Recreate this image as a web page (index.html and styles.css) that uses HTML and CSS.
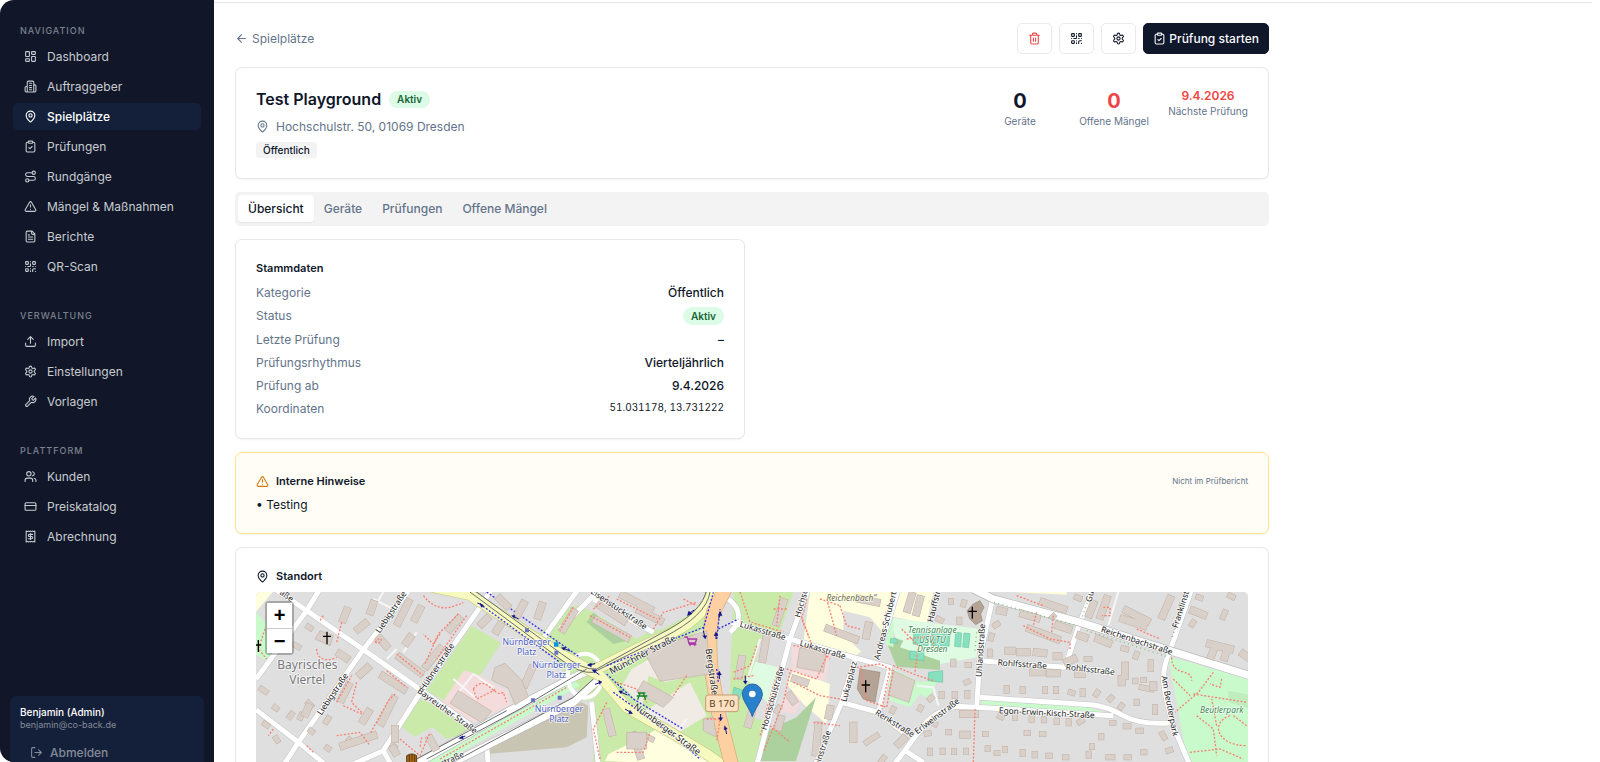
FILE: index.html
```html
<!DOCTYPE html>
<html lang="de">
<head>
<meta charset="utf-8">
<title>Test Playground – Spielplätze</title>
<link rel="stylesheet" href="styles.css">
</head>
<body>
<svg class="sprite" aria-hidden="true">
  <symbol id="i-dashboard" viewBox="0 0 24 24"><rect x="3" y="3" width="7" height="9" rx="1"/><rect x="14" y="3" width="7" height="5" rx="1"/><rect x="14" y="12" width="7" height="9" rx="1"/><rect x="3" y="16" width="7" height="5" rx="1"/></symbol>
  <symbol id="i-building" viewBox="0 0 24 24"><path d="M6 22V4a2 2 0 0 1 2-2h8a2 2 0 0 1 2 2v18ZM6 12H4a2 2 0 0 0-2 2v6a2 2 0 0 0 2 2h2M18 9h2a2 2 0 0 1 2 2v9a2 2 0 0 1-2 2h-2M10 6h4M10 10h4M10 14h4M10 18h4"/></symbol>
  <symbol id="i-pin" viewBox="0 0 24 24"><path d="M20 10c0 4.993-5.539 10.193-7.399 11.799a1 1 0 0 1-1.202 0C9.539 20.193 4 14.993 4 10a8 8 0 0 1 16 0"/><circle cx="12" cy="10" r="3"/></symbol>
  <symbol id="i-clipboard" viewBox="0 0 24 24"><rect x="8" y="2" width="8" height="4" rx="1"/><path d="M16 4h2a2 2 0 0 1 2 2v14a2 2 0 0 1-2 2H6a2 2 0 0 1-2-2V6a2 2 0 0 1 2-2h2M9 14l2 2 4-4"/></symbol>
  <symbol id="i-route" viewBox="0 0 24 24"><circle cx="6" cy="19" r="3"/><path d="M9 19h8.5a3.5 3.5 0 0 0 0-7h-11a3.5 3.5 0 0 1 0-7H15"/><circle cx="18" cy="5" r="3"/></symbol>
  <symbol id="i-alert" viewBox="0 0 24 24"><path d="m21.73 18-8-14a2 2 0 0 0-3.48 0l-8 14A2 2 0 0 0 4 21h16a2 2 0 0 0 1.73-3M12 9v4M12 17h.01"/></symbol>
  <symbol id="i-file" viewBox="0 0 24 24"><path d="M15 2H6a2 2 0 0 0-2 2v16a2 2 0 0 0 2 2h12a2 2 0 0 0 2-2V7ZM14 2v4a2 2 0 0 0 2 2h4M10 9H8M16 13H8M16 17H8"/></symbol>
  <symbol id="i-qr" viewBox="0 0 24 24"><rect x="3" y="3" width="5" height="5" rx="1"/><rect x="16" y="3" width="5" height="5" rx="1"/><rect x="3" y="16" width="5" height="5" rx="1"/><path d="M21 16h-3a2 2 0 0 0-2 2v3M21 21v.01M12 7v3a2 2 0 0 1-2 2H7M3 12h.01M12 3h.01M12 16v.01M16 12h1M21 12v.01M12 21v-1"/></symbol>
  <symbol id="i-upload" viewBox="0 0 24 24"><path d="M12 3v12M17 8l-5-5-5 5M21 15v4a2 2 0 0 1-2 2H5a2 2 0 0 1-2-2v-4"/></symbol>
  <symbol id="i-gear" viewBox="0 0 24 24"><path d="M12.22 2h-.44a2 2 0 0 0-2 2v.18a2 2 0 0 1-1 1.73l-.43.25a2 2 0 0 1-2 0l-.15-.08a2 2 0 0 0-2.73.73l-.22.38a2 2 0 0 0 .73 2.73l.15.1a2 2 0 0 1 1 1.72v.51a2 2 0 0 1-1 1.74l-.15.09a2 2 0 0 0-.73 2.73l.22.38a2 2 0 0 0 2.73.73l.15-.08a2 2 0 0 1 2 0l.43.25a2 2 0 0 1 1 1.73V20a2 2 0 0 0 2 2h.44a2 2 0 0 0 2-2v-.18a2 2 0 0 1 1-1.73l.43-.25a2 2 0 0 1 2 0l.15.08a2 2 0 0 0 2.73-.73l.22-.39a2 2 0 0 0-.73-2.73l-.15-.08a2 2 0 0 1-1-1.74v-.5a2 2 0 0 1 1-1.74l.15-.09a2 2 0 0 0 .73-2.73l-.22-.38a2 2 0 0 0-2.73-.73l-.15.08a2 2 0 0 1-2 0l-.43-.25a2 2 0 0 1-1-1.73V4a2 2 0 0 0-2-2z"/><circle cx="12" cy="12" r="3"/></symbol>
  <symbol id="i-wrench" viewBox="0 0 24 24"><path d="M14.7 6.3a1 1 0 0 0 0 1.4l1.6 1.6a1 1 0 0 0 1.4 0l3.77-3.77a6 6 0 0 1-7.94 7.94l-6.91 6.91a2.12 2.12 0 0 1-3-3l6.91-6.91a6 6 0 0 1 7.94-7.94l-3.76 3.76z"/></symbol>
  <symbol id="i-users" viewBox="0 0 24 24"><path d="M16 21v-2a4 4 0 0 0-4-4H6a4 4 0 0 0-4 4v2M22 21v-2a4 4 0 0 0-3-3.87M16 3.13a4 4 0 0 1 0 7.75"/><circle cx="9" cy="7" r="4"/></symbol>
  <symbol id="i-card" viewBox="0 0 24 24"><rect x="2" y="5" width="20" height="14" rx="2"/><path d="M2 10h20"/></symbol>
  <symbol id="i-receipt" viewBox="0 0 24 24"><path d="M4 2v20l2-1 2 1 2-1 2 1 2-1 2 1 2-1 2 1V2l-2 1-2-1-2 1-2-1-2 1-2-1-2 1ZM16 8h-6a2 2 0 1 0 0 4h4a2 2 0 1 1 0 4H8M12 17.5v-11"/></symbol>
  <symbol id="i-logout" viewBox="0 0 24 24"><path d="M16 17l5-5-5-5M21 12H9M9 21H5a2 2 0 0 1-2-2V5a2 2 0 0 1 2-2h4"/></symbol>
  <symbol id="i-back" viewBox="0 0 24 24"><path d="M12 19l-7-7 7-7M19 12H5"/></symbol>
  <symbol id="i-trash" viewBox="0 0 24 24"><path d="M3 6h18M19 6v14a2 2 0 0 1-2 2H7a2 2 0 0 1-2-2V6M8 6V4a2 2 0 0 1 2-2h4a2 2 0 0 1 2 2v2M10 11v6M14 11v6"/></symbol>
</svg>

<div class="app">
  <aside class="sidebar">
    <nav class="nav">
      <section class="nav-group">
        <h2 class="nav-title">NAVIGATION</h2>
        <a class="nav-item" href="#"><svg class="icon"><use href="#i-dashboard"/></svg>Dashboard</a>
        <a class="nav-item" href="#"><svg class="icon"><use href="#i-building"/></svg>Auftraggeber</a>
        <a class="nav-item is-active" href="#"><svg class="icon"><use href="#i-pin"/></svg>Spielplätze</a>
        <a class="nav-item" href="#"><svg class="icon"><use href="#i-clipboard"/></svg>Prüfungen</a>
        <a class="nav-item" href="#"><svg class="icon"><use href="#i-route"/></svg>Rundgänge</a>
        <a class="nav-item" href="#"><svg class="icon"><use href="#i-alert"/></svg>Mängel &amp; Maßnahmen</a>
        <a class="nav-item" href="#"><svg class="icon"><use href="#i-file"/></svg>Berichte</a>
        <a class="nav-item" href="#"><svg class="icon"><use href="#i-qr"/></svg>QR-Scan</a>
      </section>
      <section class="nav-group">
        <h2 class="nav-title">VERWALTUNG</h2>
        <a class="nav-item" href="#"><svg class="icon"><use href="#i-upload"/></svg>Import</a>
        <a class="nav-item" href="#"><svg class="icon"><use href="#i-gear"/></svg>Einstellungen</a>
        <a class="nav-item" href="#"><svg class="icon"><use href="#i-wrench"/></svg>Vorlagen</a>
      </section>
      <section class="nav-group">
        <h2 class="nav-title">PLATTFORM</h2>
        <a class="nav-item" href="#"><svg class="icon"><use href="#i-users"/></svg>Kunden</a>
        <a class="nav-item" href="#"><svg class="icon"><use href="#i-card"/></svg>Preiskatalog</a>
        <a class="nav-item" href="#"><svg class="icon"><use href="#i-receipt"/></svg>Abrechnung</a>
      </section>
    </nav>
    <div class="user">
      <div class="user-name">Benjamin (Admin)</div>
      <div class="user-mail">benjamin@co-back.de</div>
      <button class="logout" type="button"><svg class="icon"><use href="#i-logout"/></svg>Abmelden</button>
    </div>
  </aside>

  <main class="main">
    <div class="topline"></div>
    <div class="page">
      <header class="toolbar">
        <a class="back" href="#"><svg class="icon"><use href="#i-back"/></svg>Spielplätze</a>
        <div class="actions">
          <button class="btn btn-danger" type="button" aria-label="Löschen"><svg class="icon"><use href="#i-trash"/></svg></button>
          <button class="btn" type="button" aria-label="QR-Code"><svg class="icon"><use href="#i-qr"/></svg></button>
          <button class="btn" type="button" aria-label="Einstellungen"><svg class="icon"><use href="#i-gear"/></svg></button>
          <button class="btn btn-primary" type="button"><svg class="icon"><use href="#i-clipboard"/></svg>Prüfung starten</button>
        </div>
      </header>

      <section class="card summary">
        <div class="summary-info">
          <div class="headline"><h1 class="title">Test Playground</h1><span class="badge">Aktiv</span></div>
          <div class="address"><svg class="icon"><use href="#i-pin"/></svg>Hochschulstr. 50, 01069 Dresden</div>
          <span class="tag">Öffentlich</span>
        </div>
        <div class="stats">
          <div class="stat"><div class="stat-value">0</div><div class="stat-label">Geräte</div></div>
          <div class="stat"><div class="stat-value is-red">0</div><div class="stat-label">Offene Mängel</div></div>
          <div class="stat"><div class="stat-date">9.4.2026</div><div class="stat-label">Nächste Prüfung</div></div>
        </div>
      </section>

      <div class="tabs" role="tablist">
        <button class="tab is-active" type="button" role="tab" aria-selected="true">Übersicht</button>
        <button class="tab" type="button" role="tab">Geräte</button>
        <button class="tab" type="button" role="tab">Prüfungen</button>
        <button class="tab" type="button" role="tab">Offene Mängel</button>
      </div>

      <div class="columns">
        <section class="card stack">
          <h2 class="card-title">Stammdaten</h2>
          <dl class="facts">
            <div class="fact"><dt>Kategorie</dt><dd>Öffentlich</dd></div>
            <div class="fact"><dt>Status</dt><dd><span class="badge">Aktiv</span></dd></div>
            <div class="fact"><dt>Letzte Prüfung</dt><dd>–</dd></div>
            <div class="fact"><dt>Prüfungsrhythmus</dt><dd>Vierteljährlich</dd></div>
            <div class="fact"><dt>Prüfung ab</dt><dd>9.4.2026</dd></div>
            <div class="fact"><dt>Koordinaten</dt><dd class="coords">51.031178, 13.731222</dd></div>
          </dl>
        </section>
      </div>

      <section class="card stack notes">
        <div class="notes-head">
          <h2 class="card-title"><svg class="icon icon-warn"><use href="#i-alert"/></svg>Interne Hinweise</h2>
          <span class="hint">Nicht im Prüfbericht</span>
        </div>
        <p class="note">• Testing</p>
      </section>

      <section class="card stack">
        <h2 class="card-title"><svg class="icon"><use href="#i-pin"/></svg>Standort</h2>
        <div class="map">
          <svg class="map-canvas" viewBox="48 39 2976 756" preserveAspectRatio="xMidYMin slice" role="img" aria-label="Karte">
            <defs>
              <path id="b-s" d="M205 143l6 4M165 198l10 6M65 330l12 8M205 372l8 8M265 418l-6 10M155 405l-6 8M185 408l-4 8M105 385l4 3M75 435l6 4M108 478l4 6M212 455l4 3M328 482l3 3M262 507l3 2M458 500l6 4M1225 475l10 5M1610 395l6 -8M2510 55l8 3M2172 70l-2 6M2133 66v2M2095 120l8 4M2158 122v6M2140 248v8M2183 258h4M2183 308l-4 2M2105 345v6M2144 345v6M2182 342v8M2300 327v8M2348 330v6M2415 330v6M2448 330v6M2492 340l6 2M2528 337v8M2572 340l-4 6M2070 360l4 -4M2040 390l2 -4M1960 390l-3 6M2085 435l-8 -4M2060 464l6 -1M2125 460h2M2235 465h2M2360 462h4M2406 465h4M2280 412l4 2M2325 412v4M2375 418v4M2412 420v4M2450 425v4M2486 427v6M2525 425l-6 4M2617 432h3M2657 442h8M2695 455h8M2610 360l4 -4M2645 380l-3 4M2690 368v4M2745 385v14M2767 465l6 10M2785 515l6 -2M2705 325l30 6M2710 303l2 0M2686 305v2M2070 515v6M2108 515v4M2142 516v3M2178 515v3M2243 508v2M2270 522h2M2295 510v2M2348 525v-6M2384 525v4M2425 530h4M2475 535h4M2546 530v-6M2584 475v-4M2556 502v2M2605 535h12M2660 535h6M2710 520h3M2272 135l-6 4M2255 170l-2 8M2250 218v8M2440 112l-2 2M2540 240h8M2650 208l8 2M2690 225l-3 8M2732 250v20M2860 130l-4 6M2955 100l-6 14M2875 55l6 2M2970 50l8 4M1880 490l30 -20M1925 545l6 -8"/>
              <path id="b-m" d="M320 95l-10 25M355 150l20 -16M400 75l-8 22M300 225l18 12M362 285l20 -18M205 385l-8 18M540 90l-14 28M600 210l-40 50M480 235l60 45M430 292l60 38M460 360l-35 70M385 400l-15 24M505 70l-30 60M655 120l-25 30M740 120l-14 14M770 155l10 -16M780 60l20 20M850 75l-16 30M465 450v30M460 510l6 10M570 480l14 24M310 500l90 -30M325 320l-20 40M905 80l-10 30M875 270l-20 45M420 180l18 20M500 190l10 -14M1000 100l-30 50M1080 80l70 45M1150 50l80 40M1070 125l90 50M1200 95l60 30M1100 400l15 60M1180 470l20 60M1630 70l-20 60M1580 170l-12 70M1505 240l-8 50M1535 400l-10 35M1765 150l80 30M1860 60l50 10M1885 140l-6 30M1665 300l30 10M1622 420l-6 24M1650 350l10 15M2015 50l-12 40M2040 60l-10 40M2280 95l10 2M2350 105l40 12M2370 150l80 30M2410 70l60 20M2455 140l30 10M2500 240l-18 8M2560 75l-12 30M2600 60l-18 50M2660 95l60 30M2650 120l60 20M2790 60l-22 50M2860 95l30 12M2910 195l60 15M2920 215l-6 15M2960 215l-6 20M3010 225l14 10M2305 215h10M2340 220h20M2390 220l20 2M2450 232h5M2520 170l14 5M2575 180l30 12M2655 260v30M2645 300v10M2740 318v6M2170 405h35M2170 467h10M2380 280h25M2430 283h20M2515 285h10M1735 440l-8 80M1770 390l-4 20M1840 440v40M1990 480l-14 14"/>
              <path id="foot" d="M75 150l-20 60 25 30M250 110l-10 15M305 130l-15 60M230 210c0 30 30 40 60 25M470 225l80 65M550 50c40 50 80 40 120 20M655 105l-60 60-40 90M680 110l-90 130M405 190c20-30 30 10 0 0M350 310l-15 60 35 35M290 370l45-80M440 275l60 50M465 345l-20 20-55 100M600 165l-20 30-30-30M310 380l55 25M290 470l70-10 30 40M100 450l-15 20M200 500l20 20M480 480l60 50 30-70M700 330c40-50 60 30 90 10l10 30M700 330l10 30 60-30M545 475l-5 30M1000 85l-40 70M1050 110l120 65M1130 60l120 60M1240 150l30-50 100-30M1060 90l50-40M1330 60l40 20M1100 370l-40 80 20 90M1130 520h80l20-60M1400 420l40 0-10 70M1500 39l30 90 100 30M1620 50l-10 90M1640 90l-40 0M1700 60l-15 60 20 50M1680 100l40 110M1740 60l60 20M1800 80l20 60 40 10M1550 200l-20 60-50 20M1480 300l60-10M1620 260l-20 60-25 90M1610 340l-50 130M1650 280l-20 90-60 150M1660 310l80 40 60 10M1760 230l-30 70-90-30M1660 200l80 10 30 30M1760 60l30 110M1850 265l70-10 40 20-20 110-60-20-20-100M1720 430l80 10M1590 440l60 50M1130 310l60 20 30 40M1300 350l40-60M2000 180l80-10 0 50M1960 260l60 25 60 20M1950 270l-25 120M1985 150l50 50-10 80M2350 140l80 40 60 10 0 20M2330 50l80 30M2390 100l-10 40M2440 110l-5 50M2590 85h20v25h-25M2690 150l70 30M2795 235c0 60 60 30 60 70M2205 390l-5 160M2920 280l-45 60-70 60M2945 300l-5 25-30-10M2860 345l160 25M2870 410l50 40 10 80M2970 410c-60 20-40 90 50 90M2980 410l40 30M2800 300l50 50M2850 520l90-10 70 30M2930 440l-15-80"/>
            </defs>
            <rect class="land" x="48" y="39" width="2976" height="756"/>
            <!-- land use -->
            <path class="park" d="M48 100l30 32v34l22 50-14 30-38-18z"/>
            <path class="school" d="M48 39h50L48 98z"/>
            <path class="grass" d="M695 140l88 52-64 98-42-15-60 92-58-32zM545 358l160 98-85 24-43-36-52 29-48-34zM900 165l85-80 35-5 40 20 130 80 60-40 120-60 40-60 60-10-30 110-400 250-80-110z"/>
            <path class="grass" d="M1060 280l330-180 20 200 60 300H1060zM1480 39h180l-40 120-60 20-40 230 60 20-60 190h-70l20-300z"/>
            <path class="land" d="M1040 39h370l-30 50-110 60-90 20-130-85z"/>
            <path class="forest" d="M1060 100l100 85-40 10-80-65z"/>
            <path class="pink" d="M672 274l50 16 80 48 8 40-110 52-96-55zM1655 198l115 20-12 90-100-30zM1635 335l52 8-20 62-42-6z"/>
            <path class="brown" d="M745 500l280-130 20 10-5 95-60 30-240 20z"/>
            <path class="retail" d="M1175 270l215-120 16 130-130 30-50-20-20 90-60-60zM1210 400l140-90 50 100-100 60z"/>
            <path class="school" d="M1710 39h230l-10 120-80 70-160-40zM1660 275l110 40-10 120-70-60-50-60zM1095 546l10-20 120-60 40-25 80 40 70 80zM1880 39h200l-20 96-110-24zM2320 39h160v8z"/>
            <path class="mint" d="M1545 248l75 18-34 110-60-70zM1940 115l280 35-10 85-110 20-110-30z"/>
            <path class="forest" d="M1580 455l90-40 58-60-60 191h-110zM1930 165l60 20-10 20 120 40v28l-130-10z"/>
            <path class="land" d="M1810 95l80 20 50 60-20 60-60-20-50-50z"/>
            <path class="park" d="M1940 260l100 50 50-5-20 55-30-15-30 40-60-20zM1945 145l-10 50 25 10v-90z"/>
            <path class="pitch" d="M1482 325l26 8-10 28-22-5zM2022 158l45 4-3 38-45-5zM2075 162l55 4-3 36-54-3zM2147 160l18 2-3 42-18-2zM2172 162l18 2-4 42-18-2zM2010 216l42 3v26l-44-5zM2066 280l42-5v35l-44-5zM1952 178l20 3v12l-22-2z"/>
            <path class="park" d="M2785 232l239 68v260h-180zM2225 364l310 18 70 22-380-24zM700 465l300-165 20 20-430 240h-60z"/>
            <path class="forest soft" d="M2965 335l60 12v40l-60-18z"/>
            <!-- side roads -->
            <g class="casing">
              <path id="roads" d="M90 20L200 95 370 212 545 335 710 452M240 30L200 95 48 300M510 30L370 212 175 490 130 560M48 392L175 490 260 560M755 30L720 85 545 335 430 515 455 560M430 515L340 555M1015 30L905 185M1080 30L960 150M1060 60L1240 160M1055 370L1075 560M740 500L745 560M1465 60c40 30 40 70 5 100M1475 130L1650 180 1840 235 1950 265 1915 400 1805 370M1915 400L1990 460M1845 240L1805 370 1725 560M1975 30L1910 240M1705 30L1650 180 1550 560M1950 265L1920 380M2260 50L2220 230 2210 385M2560 30L2520 130 2475 265M2220 245L2475 265 2615 275V290M2145 382L2210 385 2620 410M2220 355L2560 378Q2600 382 2650 410T2790 432M2145 382Q2080 400 2050 440L1960 560M1995 515L2050 550M2855 30L2790 215Q2765 270 2772 320T2800 440L2850 560"/>
            </g>
            <use class="street" href="#roads"/>
            <path class="lane" d="M400 60l60 30M440 240l30-30M430 39l-35 60M640 360l60-75 60 40M640 300l70 60M530 160l-40 60M2030 320l50 5 15 55M2635 39l-30 100M1560 180l-40 130M1220 250l80-40M1340 420l-30 40"/>
            <path class="big-casing" d="M2200 30L2260 60 2520 130 2790 215 3030 290M520 560L800 400 980 305 1080 260M600 570L840 450 1000 370 1090 290"/>
            <path class="big" d="M2200 30L2260 60 2520 130 2790 215 3030 290M520 560L800 400 980 305 1080 260M600 570L840 450 1000 370 1090 290"/>
            <ellipse class="ring" cx="1035" cy="290" rx="52" ry="66"/>
            <!-- main roads -->
            <path class="yellow-casing" d="M560 20L690 48 860 160 960 225 1080 290 1160 385 1300 465 1400 525 1450 560M1050 280L1180 215 1300 160Q1400 110 1420 30"/>
            <path class="yellow" d="M560 20L690 48 860 160 960 225 1080 290 1160 385 1300 465 1400 525 1450 560M1050 280L1180 215 1300 160Q1400 110 1420 30"/>
            <path class="orange-casing" d="M1455 30L1420 100Q1405 150 1412 260L1435 400 1475 560"/>
            <path class="orange" d="M1455 30L1420 100Q1405 150 1412 260L1435 400 1475 560"/>
            <path class="rail" d="M690 39L860 165 960 240Q1020 285 1060 280L1270 175Q1400 110 1410 39M700 32L865 152 965 225Q1030 275 1070 270L1260 165Q1390 100 1400 30M560 540L840 390 1040 270M530 540L800 395M620 560L1000 355 1060 300"/>
            <path class="bus" d="M740 39L870 130 1020 235M720 75L850 170 960 250M1100 260L1390 145M1100 285L1180 360 1330 450M1120 340L1300 470 1380 540M1390 150l30-110M1430 180l10-90M1435 150l60-30M1430 270l5 40"/>
            <!-- buildings -->
            <g class="buildings">
              <use class="edge-s" href="#b-s"/><use class="fill-s" href="#b-s"/>
              <use class="edge-m" href="#b-m"/><use class="fill-m" href="#b-m"/>
              <path class="block" d="M655 335l100 62-30 34-95-58zM765 265l30-12 50 50 20 50-40 25-20-50-50-25zM1210 215l190-60 10 130-150 22zM1210 305l90 50-30 30-80-45zM1680 205l80 15-10 60-80-15zM1960 275l65 30-18 65-62-22zM240 155l40 15-10 30-45-20zM1160 460h60v50h-60zM1390 420l30-5 10 60-40-20z"/>
              <path class="church" d="M1860 270l60 10-15 90-35-10-18-30zM2200 75l20-10 12 20-10 20 5 20-20 12-18-18-8-24z"/>
            </g>
            <use class="footway" href="#foot"/>
            <path class="trees" d="M2262 70L2510 140M2540 155L2780 232M2545 60l-20 60M2835 60l-40 120M2210 160l-6 60"/>
            <path class="footway" d="M600 540L980 325"/>
            <!-- symbols -->
            <g class="cross"><path d="M261 158v38M249 172h24M55 183v36M48 198h16M1877 304v36M1865 318h25M2197 83v36M2185 97h26"/></g>
            <path class="stop" d="M855 148h12v12h-12zM943 215h12v12h-12zM873 358h12v12h-12zM953 350h12v12h-12z"/>
            <path class="stop-blue" d="M942 190h13v13h-13z"/>
            <path class="arrow" d="M712 72l16 6M820 112l16 8M970 208l20 8M1345 105l18-12M1045 258l20-4M1060 275l18 12M1065 316l18-6M1140 338l22 10M1155 390l20 12M1390 155l4 18M1428 180v-16M1436 118l4-14M1438 300v-18M1442 405v14M1460 465l-4-18M1516 290v18M660 477l16-6"/>
            <path class="heads" d="M732 81l-12-8 4 12zM815 110l10-2-2 10zM964 206l14-2-6 10zM1342 110l4-14 10 8zM1042 258l12-6v12zM1056 272l14 0-6 10zM1086 309l-10-5 2 12zM1136 336l12-1-5 10zM1178 404l-8-10-4 10zM1396 180l-8-10h12zM1428 158l-6 12h12zM1442 98l-8 10 12 3zM1438 276l-6 12h12zM1442 426l-6-10h12zM1454 440l-2 12 10-2zM1516 316l-6-10h12zM656 478l12-8 2 10z"/>
            <path class="shop" d="M1334 174h8l6 22h20M1344 180h26l-4 12h-20zM1350 200h.1M1364 200h.1"/>
            <path class="picnic" d="M1194 342h22M1190 351h32M1200 342l-7 20M1210 342l7 20"/>
            <path class="gate" d="M500 530q16-10 30 0v20h-30zM508 528v20M516 526v20M524 528v20"/>
            <!-- labels -->
            <g class="place"><text x="202" y="270">Bayrisches</text><text x="202" y="315">Viertel</text></g>
            <g class="transit"><text x="860" y="197">Nürnberger</text><text x="860" y="227">Platz</text><text x="949" y="268">Nürnberger</text><text x="949" y="297">Platz</text><text x="957" y="400">Nürnberger</text><text x="957" y="429">Platz</text></g>
            <g class="leisure"><text x="2077" y="161">Tennisanlage</text><text x="2077" y="191">USV TU</text><text x="2077" y="220">Dresden</text><text x="2945" y="401">Beutlerpark</text><text class="olive" x="1834" y="67">Reichenbach“</text></g>
            <g class="roadname">
              <text transform="translate(135 57) rotate(35)">aße</text>
              <text transform="translate(460 104) rotate(-56)">Liebigstraße</text>
              <text transform="translate(285 350) rotate(-56)">Liebigstraße</text>
              <text transform="translate(598 268) rotate(-56)">Hübnerstraße</text>
              <text transform="translate(617 402) rotate(36)">Bayreuther Straße</text>
              <text transform="translate(640 547) rotate(-24)">straße</text>
              <text transform="translate(1132 97) rotate(34)">Eisenstuckstraße</text>
              <text class="major" transform="translate(1212 235) rotate(-28)">Münchner Straße</text>
              <text class="major" transform="translate(1276 458) rotate(36)">Nürnberger Straße</text>
              <text class="major" transform="translate(1406 280) rotate(82)">Bergstraße</text>
              <text transform="translate(1566 163) rotate(17)">Lukasstraße</text>
              <text transform="translate(1746 220) rotate(17)">Lukasstraße</text>
              <text transform="translate(1606 360) rotate(-74)">Hochschulstraße</text>
              <text transform="translate(1692 76) rotate(-74)">Hochsc</text>
              <text transform="translate(1835 310) rotate(-75)">Lukasplatz</text>
              <text transform="translate(1945 138) rotate(-76)">Andreas-Schubert-</text>
              <text transform="translate(2090 84) rotate(-76)">Hauffstr</text>
              <text transform="translate(1756 510) rotate(-72)">einstraße</text>
              <text transform="translate(1960 440) rotate(32)">Renkstraße</text>
              <text transform="translate(2096 418) rotate(-37)">Erlweinstraße</text>
              <text transform="translate(2230 215) rotate(-86)">Uhlandstraße</text>
              <text transform="translate(2346 264) rotate(4)">Rohlfsstraße</text>
              <text transform="translate(2550 280) rotate(6)">Rohlfsstraße</text>
              <text transform="translate(2420 410) rotate(3)">Egon-Erwin-Kisch-Straße</text>
              <text transform="translate(2688 193) rotate(18)">Reichenbachstraße</text>
              <text transform="translate(2558 54) rotate(-76)">Gu</text>
              <text transform="translate(2830 94) rotate(-72)">Franklinst</text>
              <text transform="translate(2781 382) rotate(79)">Am Beutlerpark</text>
            </g>
            <rect class="shield" x="1397" y="348" width="98" height="50" rx="7"/>
            <text class="shield-text" x="1446" y="384">B 170</text>
            <!-- marker -->
            <path class="marker" d="M1537 413c-8-26-30-48-30-68a30 30 0 0 1 60 0c0 20-22 42-30 68z"/>
            <circle class="marker-dot" cx="1537" cy="345" r="10"/>
          </svg>
          <div class="zoom">
            <button class="zoom-btn" type="button" aria-label="Vergrößern">+</button>
            <button class="zoom-btn" type="button" aria-label="Verkleinern">−</button>
          </div>
        </div>
      </section>
    </div>
  </main>
</div>
</body>
</html>
```
FILE: styles.css
```css
* { box-sizing: border-box; }
body, h1, h2, p, dl, dd { margin: 0; }
body {
  font: 12px/17px Inter, "Liberation Sans", sans-serif;
  color: #0f172a;
  background: #fff;
}
button { font: inherit; color: inherit; border: 0; background: none; padding: 0; cursor: pointer; }
a { color: inherit; text-decoration: none; }
.sprite { position: absolute; width: 0; height: 0; }
.icon {
  width: 13px;
  height: 13px;
  flex: none;
  fill: none;
  stroke: currentColor;
  stroke-width: 2;
  stroke-linecap: round;
  stroke-linejoin: round;
}

.app { display: flex; height: 100vh; overflow: hidden; }

/* Sidebar */
.sidebar {
  display: flex;
  flex-direction: column;
  flex: none;
  width: 214px;
  background: #111729;
  color: #c8cbd0;
  border-radius: 14px 0 0 14px;
  overflow: hidden;
}
.nav { flex: 1; display: flex; flex-direction: column; gap: 28px; padding: 24px 13px 0; }
.nav-group { display: flex; flex-direction: column; gap: 3px; }
.nav-title { padding: 0 7px; margin-bottom: 2px; font-size: 9px; line-height: 14px; font-weight: 500; letter-spacing: 1px; color: #7c828e; }
.nav-item { display: flex; align-items: center; gap: 10px; height: 27px; padding: 0 11px; border-radius: 5px; }
.nav-item.is-active { background: #14203a; color: #fff; font-weight: 500; }
.nav-group + .nav-group { padding-top: 1px; }
.user { margin: 0 10px -12px; padding: 9px 10px 8px; border-radius: 7px; background: #14203a; }
.user-name { font-size: 10px; line-height: 14px; font-weight: 500; color: #fff; }
.user-mail { font-size: 9px; line-height: 12px; color: #848b98; }
.logout { display: flex; align-items: center; gap: 7px; height: 27px; margin-top: 8px; padding: 0 10px; font-weight: 500; color: #848b98; }

/* Main column */
.main { flex: 1; min-width: 0; overflow-y: auto; scrollbar-width: none; }
.topline { margin: 2px 8px 0 0; border-top: 1px solid #e6e6e8; }
.page { display: flex; flex-direction: column; gap: 13px; max-width: 1076px; padding: 20px 21px; }
.toolbar { display: flex; align-items: center; justify-content: space-between; }
.back { display: flex; align-items: center; gap: 4px; color: #64748b; }
.actions { display: flex; gap: 7px; }
.btn {
  display: flex;
  align-items: center;
  justify-content: center;
  gap: 3px;
  min-width: 35px;
  height: 31px;
  padding: 0 9px;
  border: 1px solid #e9eaec;
  border-radius: 5px;
  font-weight: 500;
}
.btn-danger { color: #ef4444; }
.btn-primary { background: #0f172a; border-color: #0f172a; color: #f8fafc; }

.card { padding: 20px; border: 1px solid #e8e8ea; border-radius: 7px; background: #fff; box-shadow: 0 1px 2px rgba(0, 0, 0, .05); }
.stack { display: flex; flex-direction: column; gap: 6px; }
.card-title { display: flex; align-items: center; gap: 7px; font-size: 11px; line-height: 17px; font-weight: 600; }

.summary { display: flex; justify-content: space-between; padding: 20px; }
.summary-info { display: flex; flex-direction: column; align-items: flex-start; gap: 7px; }
.headline { display: flex; align-items: center; gap: 8px; }
.title { font-size: 16px; line-height: 23px; font-weight: 600; }
.badge { display: inline-flex; align-items: center; height: 17px; padding: 0 8px; border-radius: 9px; font-size: 10px; font-weight: 600; background: #dcfce7; color: #166534; }
.address { display: flex; align-items: center; gap: 7px; color: #64748b; }
.tag { height: 16px; padding: 0 7px; border-radius: 3px; background: #f3f3f4; font-size: 10px; line-height: 16px; font-weight: 500; }
.stats { display: grid; grid-template-columns: repeat(3, 80px); gap: 14px; text-align: center; }
.stat-value { font-size: 20px; line-height: 26px; font-weight: 700; }
.stat-date { line-height: 16px; font-weight: 600; color: #ef4444; }
.stat-label { font-size: 10px; line-height: 14px; color: #64748b; white-space: nowrap; }
.is-red { color: #ef4444; }

.tabs { display: flex; height: 34px; padding: 3px 3px 4px; border-radius: 5px; background: #f3f3f3; }
.tab { padding: 0 10px; border-radius: 4px; font-weight: 500; color: #64748b; }
.tab.is-active { background: #fff; color: #0f172a; box-shadow: 0 1px 2px rgba(0, 0, 0, .06); }

.columns { display: grid; grid-template-columns: repeat(2, 1fr); gap: 14px; }
.facts { display: flex; flex-direction: column; gap: 6px; padding: 1px 0; }
.fact { display: flex; justify-content: space-between; align-items: flex-start; min-height: 17px; }
.fact dt { color: #64748b; }
.fact dd { display: flex; font-weight: 500; }
.fact .badge { height: 18px; }
.fact .coords { font-size: 10px; line-height: 15px; font-weight: 400; font-variant-numeric: tabular-nums; }

.notes { border-color: #fde68a; background: #fffdf5; }
.notes-head { display: flex; align-items: center; justify-content: space-between; }
.icon-warn { color: #d97706; }
.hint { font-size: 8px; color: #64748b; }

/* Map */
.map { position: relative; height: 252px; margin-top: 1px; overflow: hidden; border-radius: 5px; background: #dfdfdf; }
.map-canvas { display: block; width: 100%; height: 100%; }
.zoom { position: absolute; top: 9px; left: 9px; display: flex; flex-direction: column; border: 2px solid rgba(0, 0, 0, .25); border-radius: 4px; background-clip: padding-box; }
.zoom-btn { width: 25px; height: 25px; background: #fff; color: #000; font: 700 20px/25px "Liberation Sans", sans-serif; }
.zoom-btn + .zoom-btn { border-top: 1px solid #ccc; }

.land { fill: #dfdfdf; }
.park { fill: #c8facc; }
.grass { fill: #c9eaa9; }
.forest { fill: #add19e; }
.soft { opacity: .3; }
.school { fill: #ffffe0; }
.pink { fill: #f5dcdc; }
.brown { fill: #c9c5b3; }
.retail { fill: #f0ece5; }
.mint { fill: #dffce2; }
.pitch { fill: #88e0be; stroke: #6cc5a4; stroke-width: 2; }
.map-canvas path, .map-canvas use, .ring { stroke-linejoin: round; }
.casing { fill: none; stroke: #c4c4c4; stroke-width: 18; }
.street { fill: none; stroke: #fff; stroke-width: 15; }
.lane { fill: none; stroke: #f6f6f6; stroke-width: 6; }
.big-casing { fill: none; stroke: #b9b9b9; stroke-width: 26; }
.big { fill: none; stroke: #fff; stroke-width: 22; }
.ring { fill: none; stroke: #fff; stroke-width: 12; }
.yellow-casing { fill: none; stroke: #c9cc8a; stroke-width: 34; }
.yellow { fill: none; stroke: #f7fabf; stroke-width: 30; }
.orange-casing { fill: none; stroke: #d9a777; stroke-width: 44; }
.orange { fill: none; stroke: #fcd0a0; stroke-width: 40; }
.rail { fill: none; stroke: #6b6b6b; stroke-width: 3; }
.bus { fill: none; stroke: #3333e0; stroke-width: 4; stroke-dasharray: 6 5; }
.footway { fill: none; stroke: #fa8072; stroke-width: 4; stroke-dasharray: 6 5; }
.trees { fill: none; stroke: #7fbf7f; stroke-width: 4; stroke-dasharray: 3 10; }
.edge-s, .edge-m { fill: none; stroke: #c2b1a5; stroke-linecap: square; }
.fill-s, .fill-m { fill: none; stroke: #d9d0c9; stroke-linecap: square; }
.edge-s { stroke-width: 18; }
.fill-s { stroke-width: 15; }
.edge-m { stroke-width: 24; }
.fill-m { stroke-width: 21; }
.block { fill: #d9d0c9; stroke: #c2b1a5; stroke-width: 2; }
.church { fill: #b5a396; stroke: #998676; stroke-width: 2; }
.cross { fill: none; stroke: #000; stroke-width: 4; }
.stop { fill: #6874c0; }
.stop-blue { fill: #0092da; }
.arrow { fill: none; stroke: #111188; stroke-width: 3; }
.heads { fill: #111188; stroke: #111188; }
.shop { fill: none; stroke: #ac39ac; stroke-width: 4; stroke-linecap: round; }
.picnic { fill: none; stroke: #0c8a2c; stroke-width: 4; }
.gate { fill: #a86a1c; stroke: #5d3a0c; stroke-width: 3; }
.map-canvas text { font-family: "Noto Sans", sans-serif; text-anchor: middle; paint-order: stroke; stroke: rgba(255, 255, 255, .75); stroke-width: 5; stroke-linejoin: round; }
.roadname { font-size: 25px; fill: #222; }
.major { font-size: 27px; }
.place { font-size: 36px; fill: #777; }
.transit { font-size: 26px; fill: #4f5fc4; }
.leisure { font-size: 25px; font-style: italic; fill: #3c8a50; }
.olive { fill: #6b6b3a; }
.shield { fill: #fce0c0; stroke: #c79b72; stroke-width: 3; }
.map-canvas .shield-text { font-size: 29px; fill: #5c3c1c; stroke: none; }
.marker { fill: #2a81cb; stroke: #2468a4; stroke-width: 3; }
.marker-dot { fill: #fff; }
```
